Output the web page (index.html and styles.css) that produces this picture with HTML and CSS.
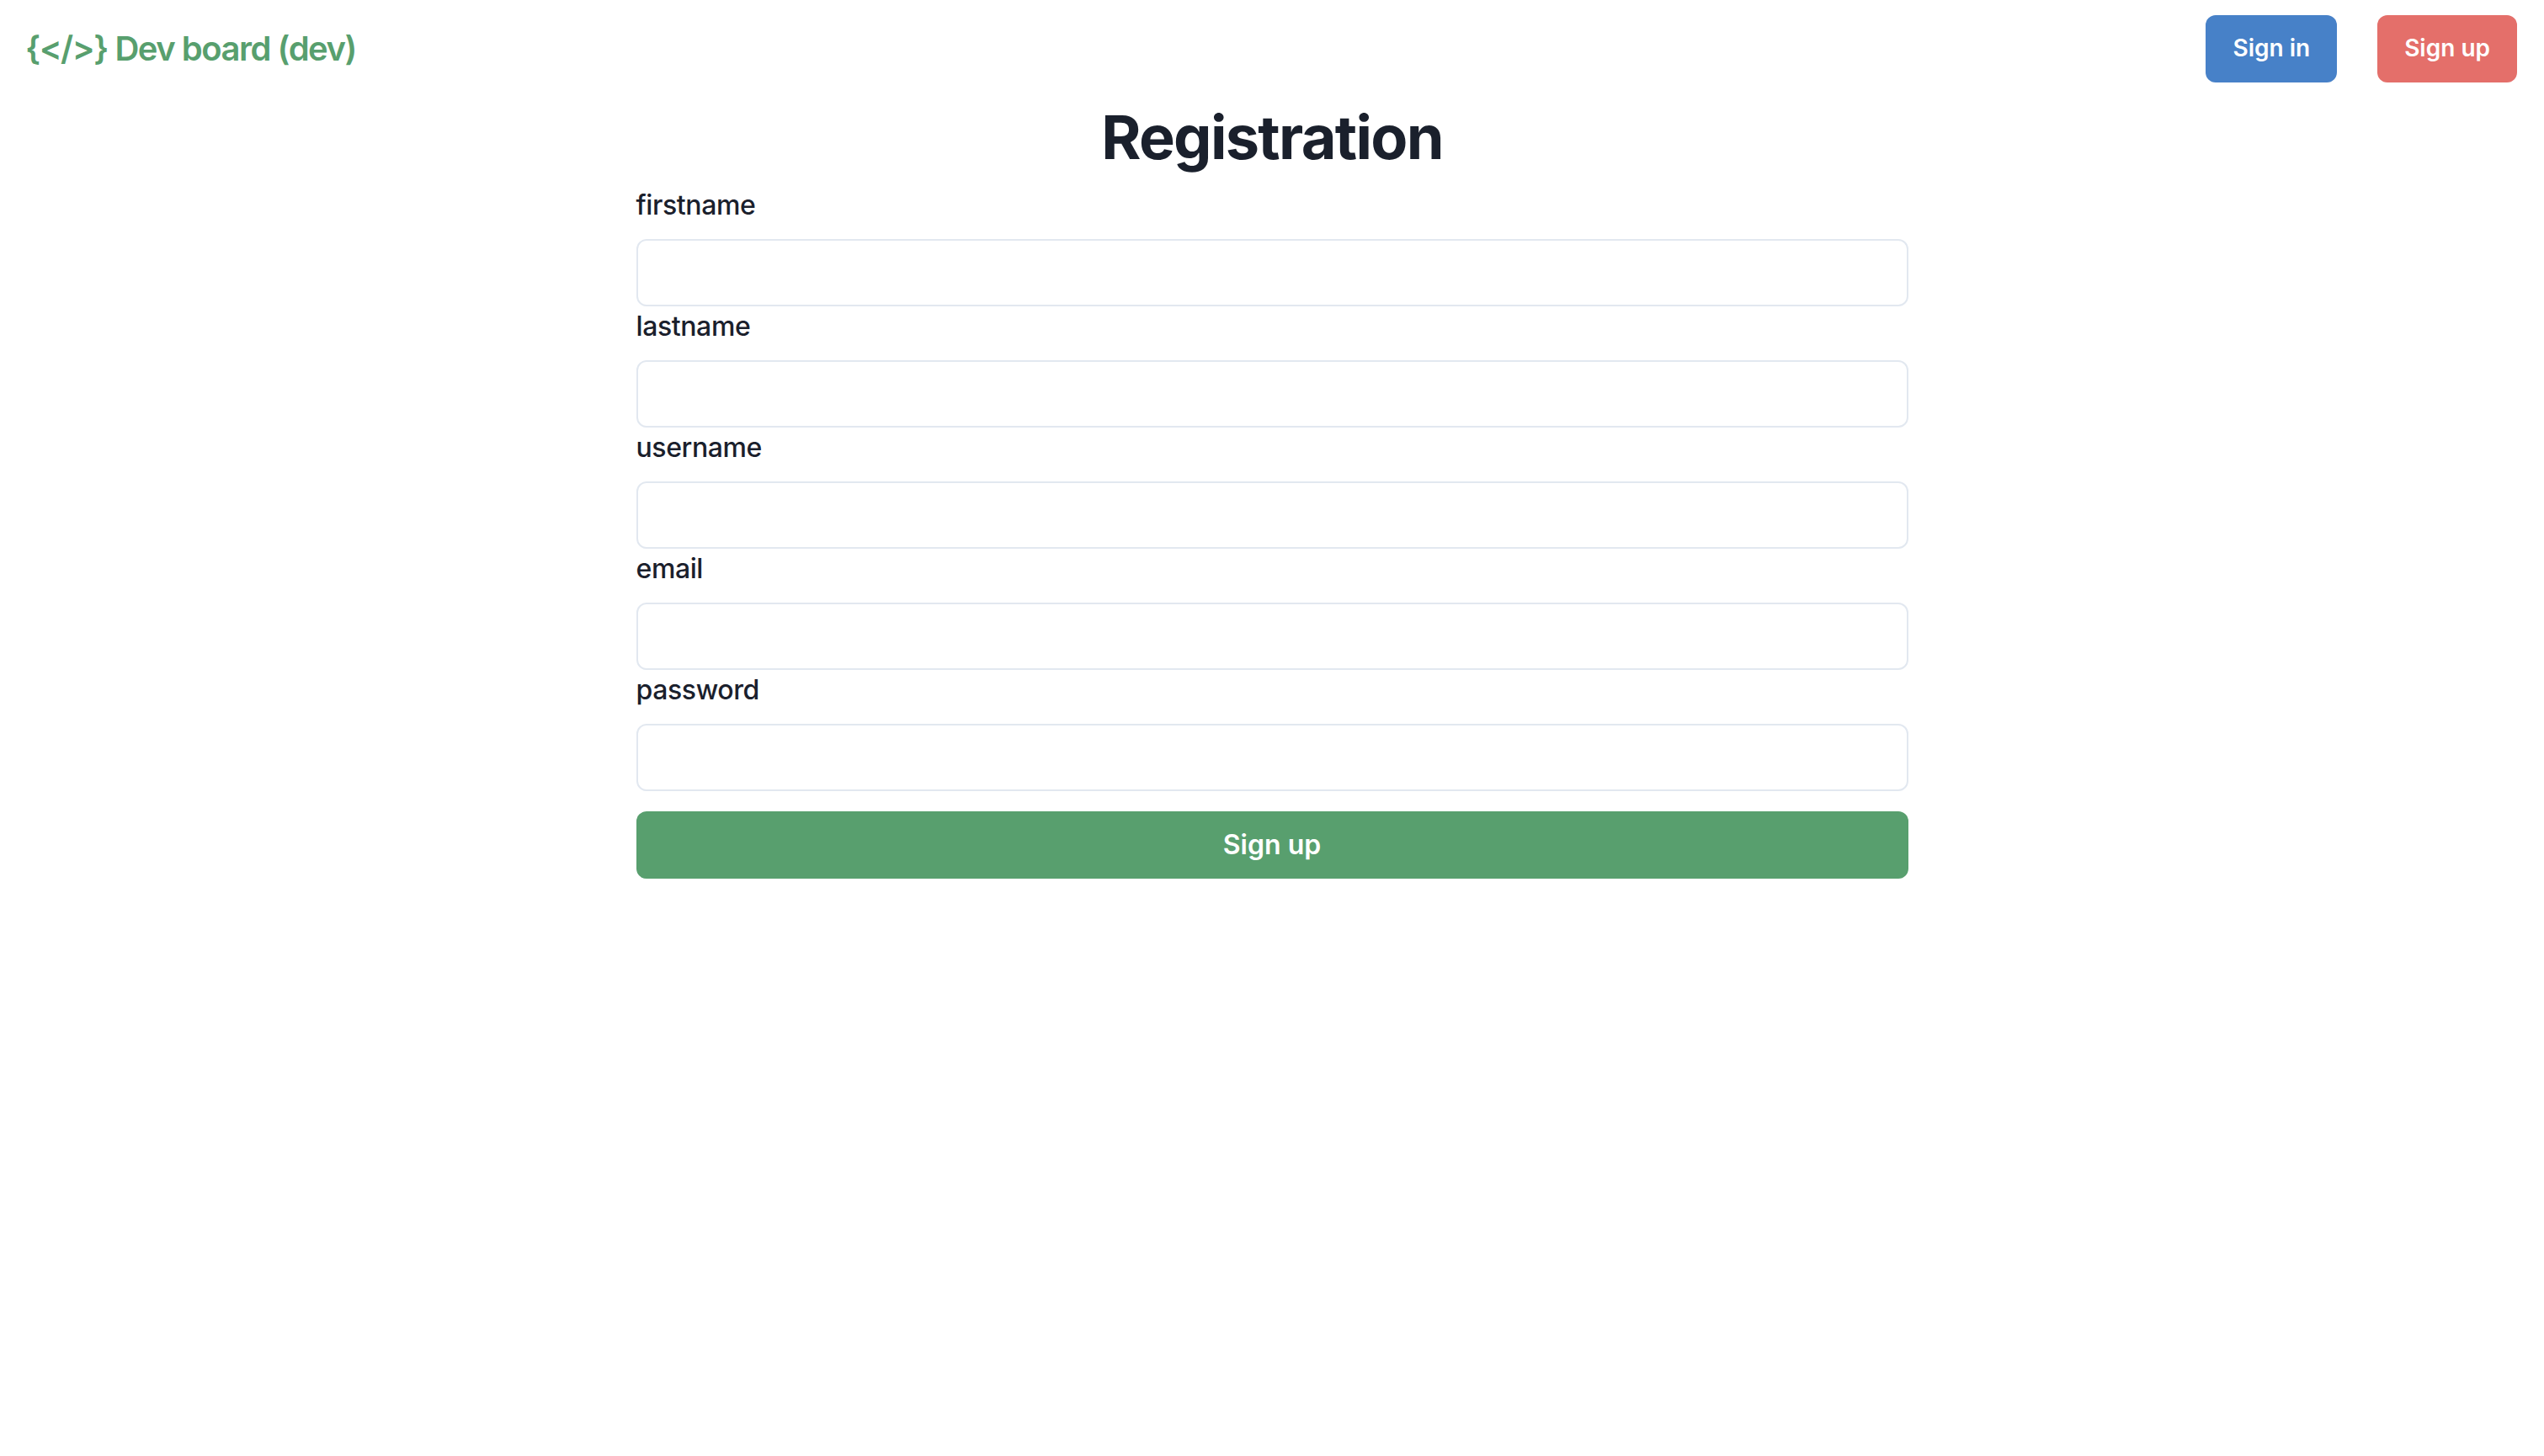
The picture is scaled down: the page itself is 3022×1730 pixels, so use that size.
FILE: index.html
```html
<!DOCTYPE html>
<html lang="en">
<head>
<meta charset="utf-8">
<title>Dev board (dev)</title>
<link rel="stylesheet" href="styles.css">
</head>
<body>
<header class="topbar">
  <a class="logo" href="#">{&lt;/&gt;} Dev board (dev)</a>
  <nav class="auth">
    <button class="btn btn-small btn-blue" type="button">Sign in</button>
    <button class="btn btn-small btn-red" type="button">Sign up</button>
  </nav>
</header>
<main class="page">
  <h2 class="title">Registration</h2>
  <form class="form">
    <div class="field">
      <label class="label" for="firstname">firstname</label>
      <input class="input" id="firstname" type="text">
    </div>
    <div class="field">
      <label class="label" for="lastname">lastname</label>
      <input class="input" id="lastname" type="text">
    </div>
    <div class="field">
      <label class="label" for="username">username</label>
      <input class="input" id="username" type="text">
    </div>
    <div class="field">
      <label class="label" for="email">email</label>
      <input class="input" id="email" type="email">
    </div>
    <div class="field">
      <label class="label" for="password">password</label>
      <input class="input" id="password" type="password">
    </div>
    <button class="btn btn-green submit" type="button">Sign up</button>
  </form>
</main>
</body>
</html>
```

FILE: styles.css
```css
* { box-sizing: border-box; }
html, body {
  margin: 0;
  padding: 0;
  background: #ffffff;
  font-family: Inter, "Noto Sans", "Liberation Sans", sans-serif;
  color: #1a202c;
}
.topbar {
  display: flex;
  align-items: center;
  justify-content: space-between;
  height: 116px;
  padding: 0 32px 0 30px;
}
.logo {
  font-size: 40px;
  font-weight: 600;
  letter-spacing: -1.5px;
  color: #589f6e;
  text-decoration: none;
  line-height: 1.2;
}
.auth {
  display: flex;
  gap: 48px;
}
.btn {
  height: 80px;
  padding: 0 32px;
  border: 0;
  border-radius: 12px;
  font-family: inherit;
  font-size: 32px;
  font-weight: 600;
  color: #ffffff;
  cursor: pointer;
  line-height: 1.2;
}
.btn-small { font-size: 28px; }
.btn-blue { background: #4781c8; }
.btn-red { background: #e46f6a; }
.btn-green { background: #589f6e; }
.page {
  width: 50%;
  margin: 0 auto;
  display: flex;
  flex-direction: column;
  align-items: stretch;
}
.title {
  margin: 4px 0 14px;
  font-size: 72px;
  font-weight: 700;
  letter-spacing: -1.7px;
  line-height: 1.2;
  text-align: center;
  color: #1a202c;
}
.form {
  display: flex;
  flex-direction: column;
}
.field {
  display: flex;
  flex-direction: column;
}
.label {
  display: block;
  font-size: 32px;
  font-weight: 500;
  letter-spacing: -0.4px;
  line-height: 1.5;
  margin-bottom: 16px;
  color: #1a202c;
}
.input {
  height: 80px;
  width: 100%;
  border: 2px solid #e2e8f0;
  border-radius: 12px;
  padding: 0 32px;
  font-family: inherit;
  font-size: 32px;
  background: #ffffff;
  outline: none;
}
.submit {
  margin-top: 24px;
  width: 100%;
}
```
